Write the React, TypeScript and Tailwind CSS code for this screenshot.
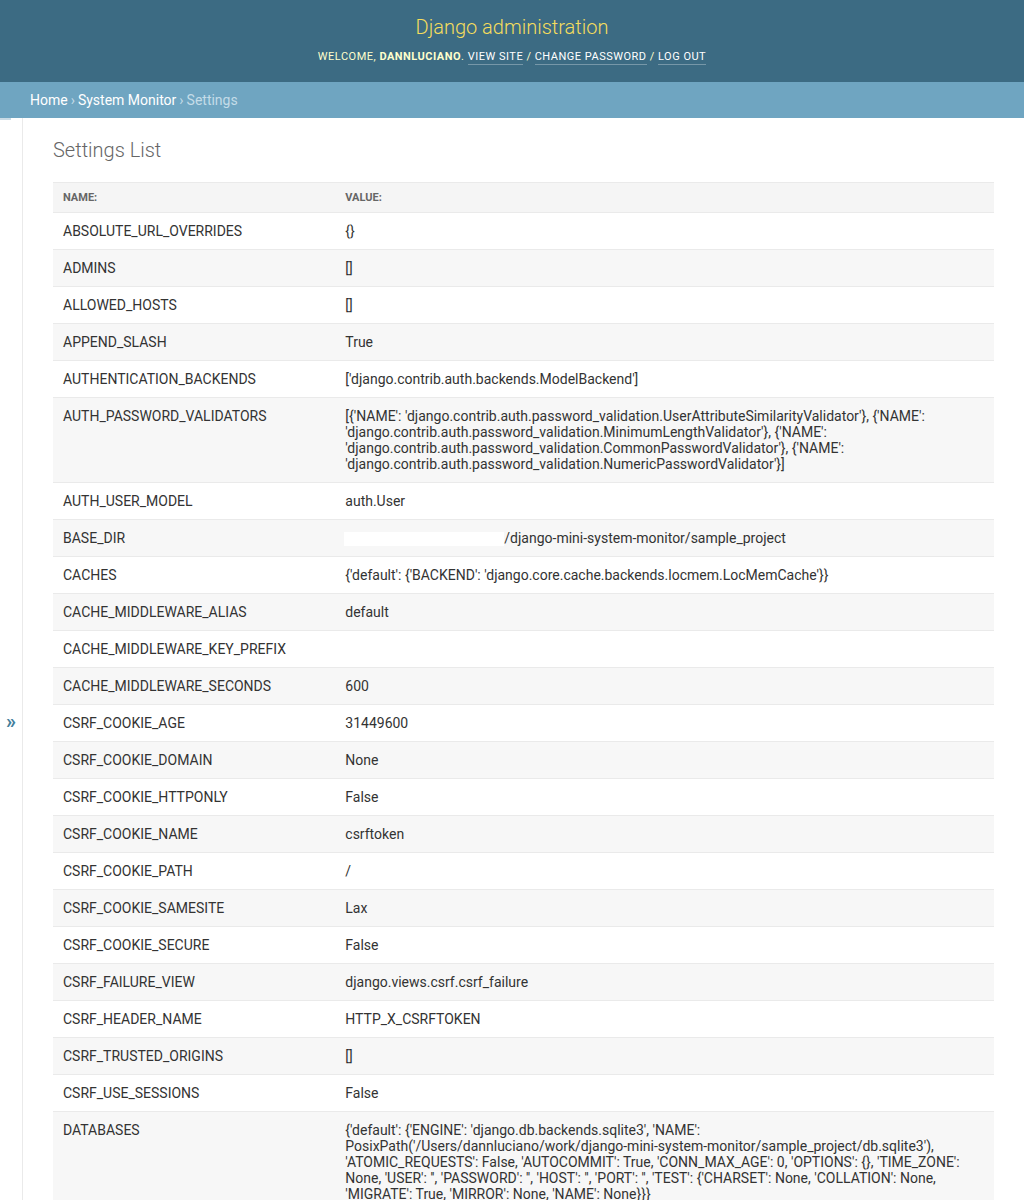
const settings: [string, string][] = [
  ["ABSOLUTE_URL_OVERRIDES", "{}"],
  ["ADMINS", "[]"],
  ["ALLOWED_HOSTS", "[]"],
  ["APPEND_SLASH", "True"],
  ["AUTHENTICATION_BACKENDS", "['django.contrib.auth.backends.ModelBackend']"],
  [
    "AUTH_PASSWORD_VALIDATORS",
    "[{'NAME': 'django.contrib.auth.password_validation.UserAttributeSimilarityValidator'}, {'NAME': 'django.contrib.auth.password_validation.MinimumLengthValidator'}, {'NAME': 'django.contrib.auth.password_validation.CommonPasswordValidator'}, {'NAME': 'django.contrib.auth.password_validation.NumericPasswordValidator'}]",
  ],
  ["AUTH_USER_MODEL", "auth.User"],
  ["BASE_DIR", "__REDACTED__"],
  ["CACHES", "{'default': {'BACKEND': 'django.core.cache.backends.locmem.LocMemCache'}}"],
  ["CACHE_MIDDLEWARE_ALIAS", "default"],
  ["CACHE_MIDDLEWARE_KEY_PREFIX", ""],
  ["CACHE_MIDDLEWARE_SECONDS", "600"],
  ["CSRF_COOKIE_AGE", "31449600"],
  ["CSRF_COOKIE_DOMAIN", "None"],
  ["CSRF_COOKIE_HTTPONLY", "False"],
  ["CSRF_COOKIE_NAME", "csrftoken"],
  ["CSRF_COOKIE_PATH", "/"],
  ["CSRF_COOKIE_SAMESITE", "Lax"],
  ["CSRF_COOKIE_SECURE", "False"],
  ["CSRF_FAILURE_VIEW", "django.views.csrf.csrf_failure"],
  ["CSRF_HEADER_NAME", "HTTP_X_CSRFTOKEN"],
  ["CSRF_TRUSTED_ORIGINS", "[]"],
  ["CSRF_USE_SESSIONS", "False"],
  [
    "DATABASES",
    "{'default': {'ENGINE': 'django.db.backends.sqlite3', 'NAME': PosixPath('/Users/dannluciano/work/django-mini-system-monitor/sample_project/db.sqlite3'), 'ATOMIC_REQUESTS': False, 'AUTOCOMMIT': True, 'CONN_MAX_AGE': 0, 'OPTIONS': {}, 'TIME_ZONE': None, 'USER': '', 'PASSWORD': '', 'HOST': '', 'PORT': '', 'TEST': {'CHARSET': None, 'COLLATION': None, 'MIGRATE': True, 'MIRROR': None, 'NAME': None}}}",
  ],
  ["DATABASE_ROUTERS", "[]"],
  ["DATA_UPLOAD_MAX_MEMORY_SIZE", "2621440"],
];

const HeaderLink = ({ children }: { children: string }) => (
  <span className="text-white border-b border-white/30 pb-[1px]">{children}</span>
);

export default function App() {
  return (
    <div className="min-h-screen bg-white text-[#333] font-['Roboto','Liberation_Sans',sans-serif] text-[14px]">
      {/* Header */}
      <div className="bg-[#3c6b83] h-[82px] flex flex-col items-center pt-[14px]">
        <h1 className="text-[20px] font-light text-[#f5dd5d] leading-[26px]">Django administration</h1>
        <div className="mt-[10px] text-[11px] uppercase tracking-[0.5px] text-[#ffc] leading-[14px]">
          Welcome, <strong className="font-bold">dannluciano</strong>.{" "}
          <HeaderLink>View site</HeaderLink> / <HeaderLink>Change password</HeaderLink> /{" "}
          <HeaderLink>Log out</HeaderLink>
        </div>
      </div>

      {/* Breadcrumbs */}
      <div className="bg-[#6fa5c1] h-[36px] flex items-center px-[30px] text-[14px] text-[#c4dce8]">
        <span className="text-white">Home</span>
        <span className="mx-[3px]">›</span>
        <span className="text-white">System Monitor</span>
        <span className="mx-[3px]">›</span>
        <span>Settings</span>
      </div>

      <div className="flex">
        {/* Sidebar toggle */}
        <div className="w-[23px] shrink-0 border-r border-[#eaeaea] relative">
          <div className="absolute left-0 top-0 w-[11px] h-[2px] bg-[#c9dbe5]" />
          <div className="sticky top-0 h-screen flex items-center justify-center">
            <span className="text-[#447e9b] text-[20px] font-bold leading-none mt-[6px]">»</span>
          </div>
        </div>

        {/* Content */}
        <div className="flex-1 min-w-0 pl-[30px] pr-[30px] pt-[20px]">
          <h1 className="text-[20px] font-light text-[#666] leading-[24px] mb-[20px]">Settings List</h1>
          <table className="w-full border-collapse">
            <thead>
              <tr className="bg-[#f5f5f5] border-t border-b border-[#eaeaea]">
                <th className="w-[30%] text-left text-[11px] font-bold uppercase text-[#666] px-[10px] py-[8px] leading-[13px]">
                  Name:
                </th>
                <th className="text-left text-[11px] font-bold uppercase text-[#666] px-[10px] py-[8px] leading-[13px]">
                  Value:
                </th>
              </tr>
            </thead>
            <tbody>
              {settings.map(([name, value], i) => (
                <tr
                  key={name}
                  className={i % 2 === 1 ? "bg-[#f7f7f7] border-b border-[#eaeaea]" : "bg-white border-b border-[#eaeaea]"}
                >
                  <td className="align-top px-[10px] py-[10px] leading-[16px]">{name}</td>
                  <td className="align-top px-[10px] py-[10px] leading-[16px] break-words">
                    {value === "__REDACTED__" ? (
                      <span>
                        <span className="inline-block w-[160px] h-[14px] bg-white align-middle -ml-[1px]" />
                        /django-mini-system-monitor/sample_project
                      </span>
                    ) : (
                      value
                    )}
                  </td>
                </tr>
              ))}
            </tbody>
          </table>
        </div>
      </div>
    </div>
  );
}
